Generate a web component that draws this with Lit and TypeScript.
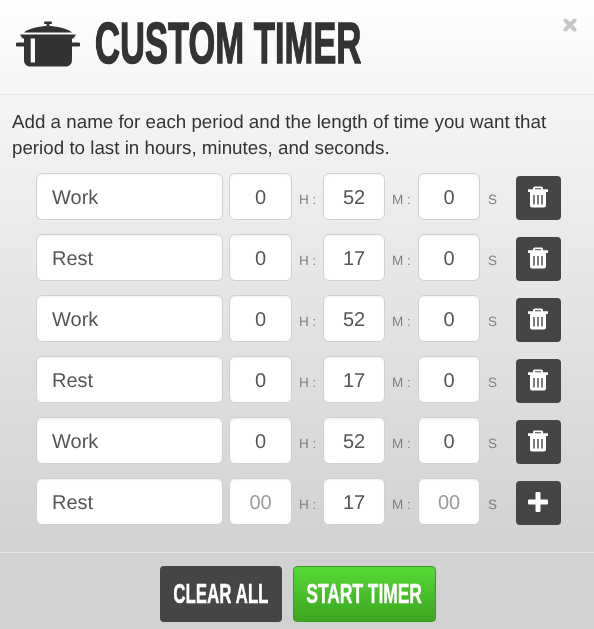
import { LitElement, html, css, svg } from "lit";
import { customElement } from "lit/decorators.js";

const periods = [
  { name: "Work", h: "0", m: "52", s: "0" },
  { name: "Rest", h: "0", m: "17", s: "0" },
  { name: "Work", h: "0", m: "52", s: "0" },
  { name: "Rest", h: "0", m: "17", s: "0" },
  { name: "Work", h: "0", m: "52", s: "0" },
  { name: "Rest", h: "", m: "17", s: "" },
];

const potIcon = svg`
  <rect x="28" y="0.500" width="8" height="2.500" rx="1" />
  <rect x="30.500" y="2" width="3" height="4" />
  <path d="M8 11.500C12 7.500 24 5 32 5s20 2.500 24 6.500z" />
  <path d="M4 13.500h56l-2.500 4H56v4h6.500a2 2 0 0 1 0 4H56V39c0 4-2.500 6.500-6.500 6.500h-35C10.500 45.500 8 43 8 39V25.500H1.500a2 2 0 0 1 0-4H8v-4H6.500z" />
  <rect x="14.700" y="17.500" width="4.300" height="24" fill="#fafafa" />
`;

@customElement("app-root")
export class AppRoot extends LitElement {
  static styles = css`
    :host {
      display: block;
      width: 594px;
      height: 629px;
      box-sizing: border-box;
      position: relative;
      overflow: hidden;
      background: linear-gradient(#ffffff 0, #f5f5f5 15%, #d1d1d1 88%, #d1d1d1 100%);
      font-family: "Liberation Sans", Arial, sans-serif;
      color: #333;
      text-rendering: geometricPrecision;
    }
    header {
      display: flex;
      align-items: center;
      height: 95px;
      box-sizing: border-box;
      padding: 0 0 0 16px;
      border-bottom: 1px solid #e4e4e4;
    }
    .pot {
      width: 64px;
      height: 46px;
      fill: #333;
      flex: none;
      margin-top: -6px;
    }
    .display {
      font-family: "Liberation Sans", sans-serif;
      font-weight: 700;
      display: inline-block;
      white-space: nowrap;
      will-change: transform;
    }
    h1 {
      margin: -7px 0 0 15px;
      font-size: 58px;
      line-height: 60px;
      color: #333;
      -webkit-text-stroke: 1.5px #333;
      transform: scaleX(0.596);
      transform-origin: left center;
    }
    .close {
      position: absolute;
      top: 18px;
      right: 17px;
      width: 14px;
      height: 14px;
      stroke: #c8c8c8;
      stroke-width: 4;
      stroke-linecap: round;
    }
    p {
      margin: 0;
      padding: 14px 40px 0 12px;
      font-size: 18.77px;
      line-height: 26px;
      will-change: transform;
    }
    .rows {
      display: flex;
      flex-direction: column;
      gap: 14px;
      padding: 12px 0 0 36px;
      will-change: transform;
    }
    .row {
      display: flex;
      align-items: center;
      height: 47px;
    }
    input {
      box-sizing: border-box;
      height: 47px;
      border: 1px solid #d0d0d0;
      border-radius: 6px;
      background: #fff;
      box-shadow: inset 0 1px 2px rgba(0, 0, 0, 0.06);
      font-family: inherit;
      font-size: 20px;
      color: #555;
      outline: none;
      padding: 4px 0 0;
      text-rendering: geometricPrecision;
    }
    input::placeholder {
      color: #999;
      opacity: 1;
    }
    .name {
      width: 187px;
      padding-left: 15px;
      margin-right: 6px;
    }
    .hours {
      width: 63px;
      text-align: center;
    }
    .num {
      width: 62px;
      text-align: center;
    }
    .unit {
      width: 33px;
      padding: 6px 0 0 7px;
      box-sizing: border-box;
      font-size: 13.5px;
      color: #808080;
      white-space: nowrap;
    }
    .unit.h {
      width: 31px;
    }
    .unit.s {
      width: 36px;
      padding-left: 8px;
    }
    .icon-btn {
      width: 45px;
      height: 44px;
      padding: 0;
      border: 0;
      border-radius: 4px;
      background: #444645;
      display: flex;
      align-items: center;
      justify-content: center;
      margin-top: 3px;
    }
    .icon-btn svg {
      fill: #fff;
      display: block;
      margin: 0 1px 2px 0;
    }
    footer {
      position: absolute;
      left: 0;
      right: 0;
      bottom: 0;
      height: 77px;
      box-sizing: border-box;
      border-top: 1px solid #e6e6e6;
      display: flex;
      justify-content: center;
      gap: 11px;
      padding: 13px 0 0 2px;
    }
    .action {
      height: 56px;
      box-sizing: border-box;
      border-radius: 4px;
      color: #fff;
      display: flex;
      align-items: center;
      justify-content: center;
      padding: 0;
    }
    .action .display {
      font-size: 28px;
      -webkit-text-stroke: 0.5px #fff;
    }
    .clear {
      width: 122px;
      border: 0;
      background: #444645;
    }
    .clear .display {
      transform: scaleX(0.604);
    }
    .start {
      width: 143px;
      border: 1px solid #3a9a20;
      background: linear-gradient(#55d936, #3ca51f);
    }
    .start .display {
      transform: scaleX(0.62);
    }
  `;

  render() {
    return html`
      <header>
        <svg class="pot" viewBox="0 0 64 46">${potIcon}</svg>
        <h1 class="display">CUSTOM TIMER</h1>
      </header>
      <svg class="close" viewBox="0 0 14 14">
        <path d="M2.500 2.500l9 9M11.500 2.500l-9 9" />
      </svg>
      <p>
        Add a name for each period and the length of time you want that period
        to last in hours, minutes, and seconds.
      </p>
      <div class="rows">
        ${periods.map((period, i) => this.renderRow(period, i === periods.length - 1))}
      </div>
      <footer>
        <button class="action clear"><span class="display">CLEAR ALL</span></button>
        <button class="action start"><span class="display">START TIMER</span></button>
      </footer>
    `;
  }

  renderRow(period: { name: string; h: string; m: string; s: string }, last: boolean) {
    return html`
      <div class="row">
        <input class="name" .value=${period.name} />
        <input class="hours" .value=${period.h} placeholder="00" />
        <span class="unit h">H :</span>
        <input class="num" .value=${period.m} placeholder="00" />
        <span class="unit">M :</span>
        <input class="num" .value=${period.s} placeholder="00" />
        <span class="unit s">S</span>
        <button class="icon-btn">${last ? this.plusIcon() : this.trashIcon()}</button>
      </div>
    `;
  }

  trashIcon() {
    return html`<svg width="20" height="22" viewBox="0 0 20 22">
      <path d="M6.500 0.500h7a1.500 1.500 0 0 1 1.500 1.500v1.200H20V6H0V3.200h5V2A1.500 1.500 0 0 1 6.500 0.500zM7 2.200v1h6v-1z" />
      <path fill-rule="evenodd" d="M2 6h16V19.500a2 2 0 0 1-2 2H4a2 2 0 0 1-2-2zM5.300 9v9.500h1.400V9zM9.300 9v9.500h1.400V9zM13.300 9v9.500h1.400V9z" />
    </svg>`;
  }

  plusIcon() {
    return html`<svg width="20" height="20" viewBox="0 0 20 20">
      <path d="M8.500 0h3a1 1 0 0 1 1 1v6.500H19a1 1 0 0 1 1 1v3a1 1 0 0 1-1 1h-6.500V19a1 1 0 0 1-1 1h-3a1 1 0 0 1-1-1v-6.500H1a1 1 0 0 1-1-1v-3a1 1 0 0 1 1-1h6.500V1a1 1 0 0 1 1-1z" />
    </svg>`;
  }
}
